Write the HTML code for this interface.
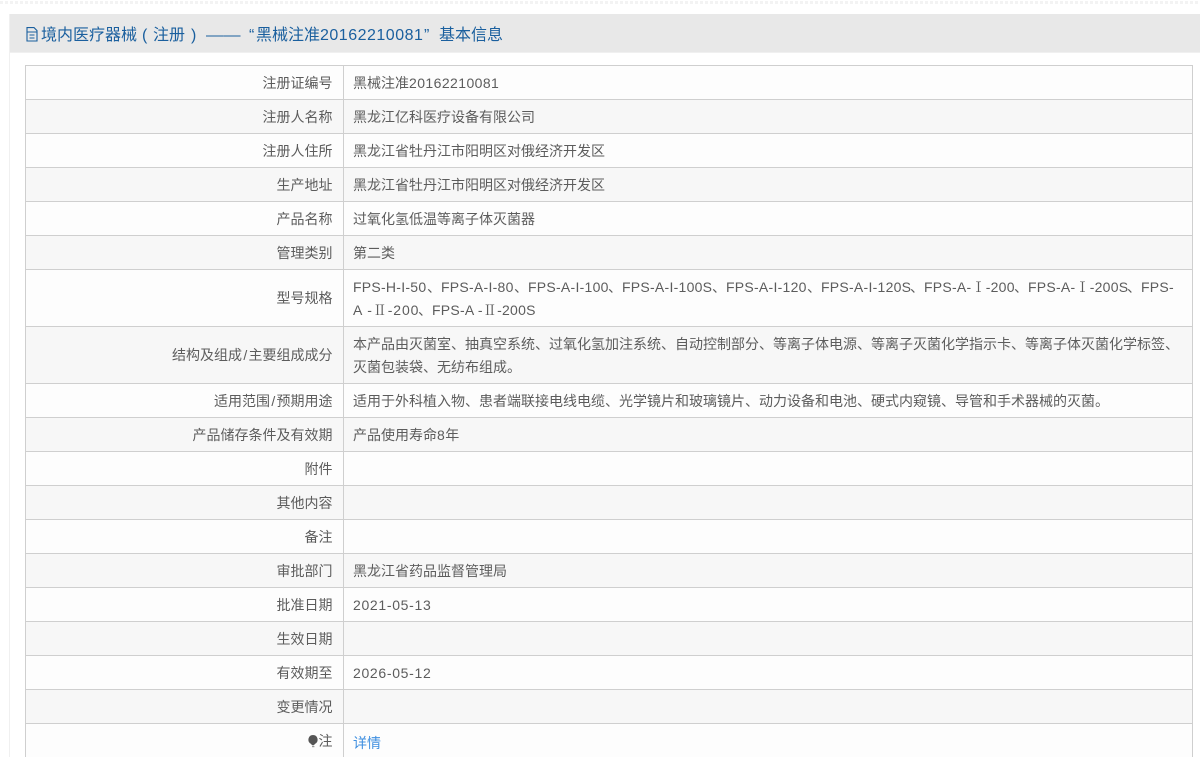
<!DOCTYPE html>
<html lang="zh-CN">
<head>
<meta charset="utf-8">
<title>基本信息</title>
<style>
html,body{margin:0;padding:0;background:#fff;}
body{width:1200px;height:757px;overflow:hidden;position:relative;font-family:"Liberation Sans","WenQuanYi Zen Hei","Noto Sans CJK SC",sans-serif;font-size:14px;color:#5c5c5c;}
.dots{position:absolute;left:0;top:1px;width:1200px;height:3px;background:repeating-linear-gradient(90deg,#f3f3f3 0 3px,#fff 3px 5px);}
.side{position:absolute;left:9px;top:14px;width:1px;height:743px;background:#f0f0f0;}
.head{position:absolute;left:10px;top:14px;width:1190px;height:38px;background:#e8e8e8;border-bottom:1px solid #f0f0f0;}
.t{position:absolute;top:26px;line-height:20px;font-size:16px;color:#1a5f9e;white-space:nowrap;}
.ico{position:absolute;left:26px;top:27px;}
.tb{position:absolute;left:25px;top:65px;width:1168px;height:692px;border:1px solid #cfcfcf;border-width:1px 1px 0 1px;box-sizing:border-box;overflow:hidden;}
.r{position:absolute;left:0;width:1166px;border-bottom:1px solid #cfcfcf;box-sizing:border-box;}
.r.g{background:#f7f7f7;}
.r.w{background:#fdfdfd;}
.l{position:absolute;left:0;top:0;bottom:0;width:317px;border-right:1px solid #cfcfcf;box-sizing:content-box;}
.l span{position:absolute;right:10.5px;top:50%;margin-top:-10px;line-height:20px;white-space:nowrap;}
.l b{font-weight:normal;padding:0 1.3px;}
.v{position:absolute;left:327px;top:6px;width:826px;line-height:22.5px;white-space:nowrap;}
.v i{font-style:normal;letter-spacing:.42px;}
.v i.d{letter-spacing:.68px;}
.v u{text-decoration:none;display:inline-block;letter-spacing:.26px;}
.v s{text-decoration:none;font-family:"Noto Serif CJK SC",serif;}
a{color:#3f8fe0;text-decoration:none;}
</style>
</head>
<body>
<div class="dots"></div>
<div class="side"></div>
<div class="head"></div>
<svg class="ico" width="12" height="15" viewBox="0 0 12 15" fill="none" stroke="#1a5f9e" stroke-width="1.1"><path d="M1 .6H8L11 3.6V14H1Z"/><path d="M1 5H11M3.5 8H8.5M3.5 11H8.5"/></svg>
<div class="t" style="left:41px">境内医疗器械</div>
<div class="t" style="left:142px">(</div>
<div class="t" style="left:153px">注册</div>
<div class="t" style="left:191px">)</div>
<div class="t" style="left:206px;letter-spacing:0;transform-origin:0 50%;transform:scaleX(1.08)">——</div>
<div class="t" style="left:249px">“</div>
<div class="t" style="left:256px">黑械注准</div>
<div class="t" style="left:320px;letter-spacing:.5px">20162210081</div>
<div class="t" style="left:424px">”</div>
<div class="t" style="left:439px">基本信息</div>
<div class="tb">
<div class="r w" style="top:0;height:34px"><div class="l"><span>注册证编号</span></div><div class="v">黑械注准<i>20162210081</i></div></div>
<div class="r g" style="top:34px;height:34px"><div class="l"><span>注册人名称</span></div><div class="v">黑龙江亿科医疗设备有限公司</div></div>
<div class="r w" style="top:68px;height:34px"><div class="l"><span>注册人住所</span></div><div class="v">黑龙江省牡丹江市阳明区对俄经济开发区</div></div>
<div class="r g" style="top:102px;height:34px"><div class="l"><span>生产地址</span></div><div class="v">黑龙江省牡丹江市阳明区对俄经济开发区</div></div>
<div class="r w" style="top:136px;height:34px"><div class="l"><span>产品名称</span></div><div class="v">过氧化氢低温等离子体灭菌器</div></div>
<div class="r g" style="top:170px;height:34px"><div class="l"><span>管理类别</span></div><div class="v">第二类</div></div>
<div class="r w" style="top:204px;height:57px"><div class="l"><span>型号规格</span></div><div class="v"><u style="width:74px">FPS-H-I-50</u>、<u style="width:73px">FPS-A-I-80</u>、<u style="width:80px">FPS-A-I-100</u>、<u style="width:90px">FPS-A-I-100S</u>、<u style="width:81px">FPS-A-I-120</u>、<u style="width:89px">FPS-A-I-120S</u>、<u style="width:90px">FPS-A-<s>Ⅰ</s>-200</u>、<u style="width:99px">FPS-A-<s>Ⅰ</s>-200S</u>、<u>FPS-</u><br><u style="width:65px;letter-spacing:.9px">A -<s>Ⅱ</s>-200</u>、<u>FPS-A -<s>Ⅱ</s>-200S</u></div></div>
<div class="r g" style="top:261px;height:57px"><div class="l"><span>结构及组成<b>/</b>主要组成成分</span></div><div class="v">本产品由灭菌室、抽真空系统、过氧化氢加注系统、自动控制部分、等离子体电源、等离子灭菌化学指示卡、等离子体灭菌化学标签、<br>灭菌包装袋、无纺布组成。</div></div>
<div class="r w" style="top:318px;height:34px"><div class="l"><span>适用范围<b>/</b>预期用途</span></div><div class="v">适用于外科植入物、患者端联接电线电缆、光学镜片和玻璃镜片、动力设备和电池、硬式内窥镜、导管和手术器械的灭菌。</div></div>
<div class="r g" style="top:352px;height:34px"><div class="l"><span>产品储存条件及有效期</span></div><div class="v">产品使用寿命<i>8</i>年</div></div>
<div class="r w" style="top:386px;height:34px"><div class="l"><span>附件</span></div></div>
<div class="r g" style="top:420px;height:34px"><div class="l"><span>其他内容</span></div></div>
<div class="r w" style="top:454px;height:34px"><div class="l"><span>备注</span></div></div>
<div class="r g" style="top:488px;height:34px"><div class="l"><span>审批部门</span></div><div class="v">黑龙江省药品监督管理局</div></div>
<div class="r w" style="top:522px;height:34px"><div class="l"><span>批准日期</span></div><div class="v"><i class="d">2021-05-13</i></div></div>
<div class="r g" style="top:556px;height:34px"><div class="l"><span>生效日期</span></div></div>
<div class="r w" style="top:590px;height:34px"><div class="l"><span>有效期至</span></div><div class="v"><i class="d">2026-05-12</i></div></div>
<div class="r g" style="top:624px;height:34px"><div class="l"><span>变更情况</span></div></div>
<div class="r w" style="top:658px;height:40px;border-bottom:0"><div class="l"><span style="top:7px;margin-top:0"><svg width="12" height="14" viewBox="0 0 12 14" style="vertical-align:-2px;margin-right:0"><path d="M6 1A4.7 4.7 0 0 0 3.8 9.8L5.2 11.2H6.8L8.2 9.8A4.7 4.7 0 0 0 6 1Z" fill="#555"/><rect x="5" y="12" width="2.4" height="1.2" fill="#999"/></svg>注</span></div><div class="v" style="top:8px"><a href="#">详情</a></div></div>
</div>
</body>
</html>
